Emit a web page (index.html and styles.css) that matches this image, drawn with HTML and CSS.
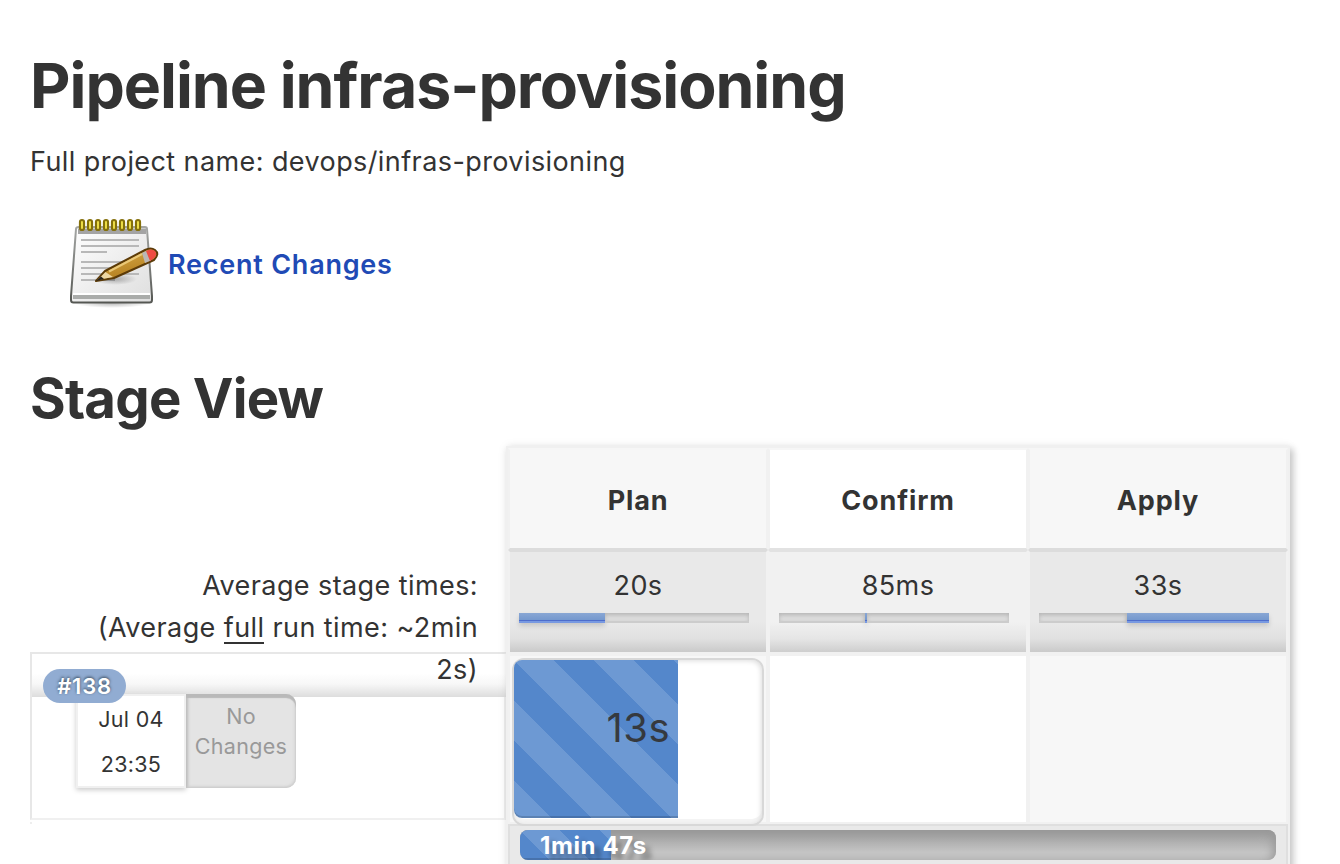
FILE: index.html
```html
<!DOCTYPE html>
<html lang="en">
<head>
<meta charset="utf-8">
<title>Pipeline infras-provisioning</title>
<link rel="stylesheet" href="styles.css">
</head>
<body>
<main class="page">
  <h1 class="title">Pipeline infras-provisioning</h1>
  <p class="project">Full project name: devops/infras-provisioning</p>
  <a class="changes-link">
    <svg class="notepad" viewBox="0 0 96 96" width="96" height="96">
      <defs>
        <linearGradient id="paper" x1="0" y1="0" x2="1" y2="1"><stop offset="0" stop-color="#fff"/><stop offset="1" stop-color="#dedede"/></linearGradient>
        <linearGradient id="wood" x1="0" y1="0" x2=".4" y2="1"><stop offset="0" stop-color="#ddb04f"/><stop offset="1" stop-color="#b17c1c"/></linearGradient>
        <linearGradient id="edge" x1="0" y1="0" x2="0" y2="1"><stop offset="0" stop-color="#a5a7a5"/><stop offset="1" stop-color="#555753"/></linearGradient>
        <radialGradient id="shade"><stop offset="0" stop-color="#000" stop-opacity=".28"/><stop offset="1" stop-color="#000" stop-opacity="0"/></radialGradient>
      </defs>
      <ellipse cx="44" cy="83" rx="38" ry="5" fill="url(#shade)"/>
      <path d="M11 7H77q2 0 2 2L84 76V80q0 2.500-2.500 2.500H5.500Q3 82.500 3 80V76L8 9q0-2 3-2Z" fill="url(#paper)" stroke="url(#edge)" stroke-width="2"/>
      <path d="M10 8.500H78V14H10Z" fill="#a4a4a4"/>
      <path d="M5 74H82" stroke="#fff" stroke-width="2"/><path d="M5 77H82" stroke="#aaacaa" stroke-width="4"/>
      <path d="M13 20H71M13 26H71M13 32H39M13 42H71M13 48H57M13 54H71M13 60H47" stroke="#b8b8b8" stroke-width="2"/>
      <ellipse cx="47" cy="59" rx="22" ry="6" fill="url(#shade)"/>
      <g fill="#f7e84d" stroke="#85700b" stroke-width="2.200"><rect x="12" y="0" width="4" height="10" rx="2"/><rect x="20" y="0" width="4" height="10" rx="2"/><rect x="28" y="0" width="4" height="10" rx="2"/><rect x="36" y="0" width="4" height="10" rx="2"/><rect x="44" y="0" width="4" height="10" rx="2"/><rect x="52" y="0" width="4" height="10" rx="2"/><rect x="60" y="0" width="4" height="10" rx="2"/><rect x="68" y="0" width="4" height="10" rx="2"/></g>
      <path d="M28 61L37 51L77 30Q83 27 87 30Q92 34 86 40L46 58Z" fill="url(#wood)" stroke="#5c3b08" stroke-width="2" stroke-linejoin="round"/>
      <path d="M29.500 60L37.500 52L45 57Z" fill="#edd7a4"/><path d="M28 61L33 56.500L36 59Z" fill="#29251d"/>
      <path d="M41 51.500L74 34" stroke="#eac878" stroke-width="2"/>
      <path d="M74 33L79 30.500L83 40.500L77 43Z" fill="#bbb7b5"/>
      <path d="M78 31Q83 28 87 31Q90 35 85 39L82 41Z" fill="#ef4d43"/>
    </svg>
    <span>Recent Changes</span>
  </a>
  <h2 class="heading">Stage View</h2>
  <section class="stage-view">
    <aside class="runs">
      <p class="averages">Average stage times:<br>(Average <span class="full">full</span> run time: ~2min 2s)</p>
      <div class="run">
        <div class="run-head"></div>
        <span class="badge">#138</span>
        <div class="run-info">
          <div class="when"><span>Jul 04</span><span>23:35</span></div>
          <div class="nochange">No<br>Changes</div>
        </div>
      </div>
      <div class="next-run"></div>
    </aside>
    <div class="stages">
      <div class="row names"><div class="cell odd">Plan</div><div class="cell">Confirm</div><div class="cell odd">Apply</div></div>
      <div class="row times">
        <div class="cell odd">20s<div class="track"><i class="fill" style="width:86px"></i><i class="rest"></i></div></div>
        <div class="cell">85ms<div class="track"><i class="rest" style="flex:0 0 86px"></i><i class="fill" style="width:2px"></i><i class="rest"></i></div></div>
        <div class="cell odd">33s<div class="track"><i class="rest"></i><i class="fill" style="width:142px"></i></div></div>
      </div>
      <div class="row results">
        <div class="cell odd"><div class="active"><div class="stripes progress"></div><span class="duration">13s</span></div></div>
        <div class="cell"></div><div class="cell odd"></div>
      </div>
      <div class="total"><div class="total-track"><div class="stripes total-fill"></div><span class="total-text">1min 47s</span></div></div>
    </div>
  </section>
</main>
</body>
</html>
```
FILE: styles.css
```css
* { box-sizing: border-box; }
html, body { height: 100%; }
body { margin: 0; overflow: hidden; background: #fff; color: #333; font: 27px/42px Inter, sans-serif; letter-spacing: .41px; }
.page { height: 864px; overflow: hidden; padding: 49px 50px 0 30px; }
.title { margin: 0; height: 72px; font-size: 62.5px; line-height: 72px; font-weight: 700; letter-spacing: -1.02px; white-space: nowrap; }
.project { margin: 20px 0 0; }
.changes-link { display: flex; align-items: center; gap: 4px; margin: 37px 0 0 38px; height: 96px; width: max-content; color: #204ab5; font-weight: 600; letter-spacing: .77px; }
.notepad { display: block; flex: none; overflow: visible; }
.changes-link span { padding-bottom: 7px; }
.heading { margin: 50px 0 0; height: 64px; line-height: 65px; font-size: 54.5px; font-weight: 700; letter-spacing: -.77px; }
.stage-view { display: flex; margin-top: 16px; width: 1260px; height: 430px; }
.runs { width: 476px; padding-top: 119px; }
.averages { position: relative; z-index: 3; height: 87px; margin: 0; padding: 0 28px 0 60px; text-align: right; }
.full { display: inline-block; line-height: 28px; border-bottom: 2px solid #333; }
.run { position: relative; height: 168px; border: 2px solid #e7e7e7; border-bottom-color: #f0f0f0; border-right-color: #eee; }
.run-head { height: 43px; margin-right: -2px; background: linear-gradient(#fff 45%, #f7f7f7 70%, #ddd); }
.badge { position: absolute; z-index: 3; left: 11px; top: 15px; width: 83px; height: 34px; border-radius: 17px; background: #91acd2; color: #fff; text-align: center; font-size: 22px; line-height: 34px; font-weight: 600; letter-spacing: .8px; text-shadow: 0 -1px 3px #345; }
.run-info { display: flex; position: relative; margin: -3px 0 0 44px; height: 94px; font-size: 21.5px; letter-spacing: .3px; }
.when { display: flex; flex-direction: column; width: 110px; height: 94px; border: 2px solid #f0f0f0; background: #fff; text-align: center; line-height: 45px; box-shadow: 0 2px 5px #ccc; }
.when span:first-child { padding-top: 1px; }
.nochange { width: 110px; height: 94px; padding-top: 7px; line-height: 30px; border-radius: 0 10px 10px 0; background: #e4e4e4; color: #999; text-align: center; box-shadow: inset 0 4px 1px #b9b9b9, inset -1px -1px 3px #ccc, inset 2px 0 3px #bbb; }
.next-run { height: 2px; margin-top: 2px; width: 2px; background: #eee; }
.stages { position: relative; width: 784px; height: 450px; border: 2px solid #f0f0f0; background: #f2f2f2; box-shadow: 3px 3px 7px #c4c4c4, 0 0 10px rgba(0,0,0,.06); }
.row { display: grid; grid-template-columns: repeat(3, 260px); width: 780px; }
.cell { border: 2px solid #f1f1f1; background: #fff; text-align: center; }
.odd { background: #f7f7f7; }
.names .cell { height: 102px; line-height: 101px; font-weight: 700; letter-spacing: .85px; border-top-color: #f6f6f6; border-bottom-color: #e2e2e2; }
.names .odd { border-bottom-color: #dcdcdc; }
.times .cell { height: 104px; padding: 13px 9px 0 9px; border-top-color: #e2e2e2; background: linear-gradient(#f1f1f1 70%, #e5e5e5 87%, #cecece); }
.times .odd { border-top-color: #dcdcdc; background: linear-gradient(#e9e9e9 70%, #e0e0e0 87%, #cacaca); }
.times .cell { background-clip: padding-box; }
.track { display: flex; width: 230px; height: 10px; margin-top: 6px; }
.rest { flex: 1; height: 10px; background: #ddd; border-bottom: 2px solid #ccc; box-shadow: inset 0 2px 4px #b4b4b4; }
.fill { flex: none; height: 10px; background: linear-gradient(#89a7d4 0, #7699ce 65%, #4d6dcc 75%, #4d6dcc 80%, #7899e1 80%); box-shadow: 0 3px 5px rgba(0,0,0,.15); }
.results .cell { height: 170px; padding: 2px; }
.active { position: relative; width: 252px; height: 168px; border: 2px solid #d8d8d8; border-radius: 12px; background: #fff; box-shadow: inset -1px 1px 5px #ddd, inset 0 -5px #f4f4f4; }
.stripes { background-color: #5487cb; background-image: linear-gradient(45deg, rgba(255,255,255,.15) 25%, transparent 25%, transparent 50%, rgba(255,255,255,.15) 50%, rgba(255,255,255,.15) 75%, transparent 75%); background-size: 80px 80px; box-shadow: inset 0 -2px rgba(0,0,0,.15); }
.progress { width: 164px; height: 158px; border-radius: 8px 0 0 8px; }
.duration { position: absolute; right: 92px; top: 44px; font-size: 40px; line-height: 48px; letter-spacing: .5px; opacity: .92; }
.total { height: 60px; padding: 4px 10px; border: 2px solid #dfdfdf; background: #e9e9e9; }
.total-track { position: relative; width: 756px; height: 30px; border-radius: 8px; overflow: hidden; background: linear-gradient(#999, #c5c5c5 75%); box-shadow: inset -3px 2px 10px #999; }
.total-fill { width: 91px; height: 30px; }
.total-text { position: absolute; left: 20px; top: 0; color: #fff; font-size: 24px; line-height: 31px; font-weight: 700; letter-spacing: .6px; text-shadow: 6px 6px 5px rgba(0,0,0,.35); }
```
